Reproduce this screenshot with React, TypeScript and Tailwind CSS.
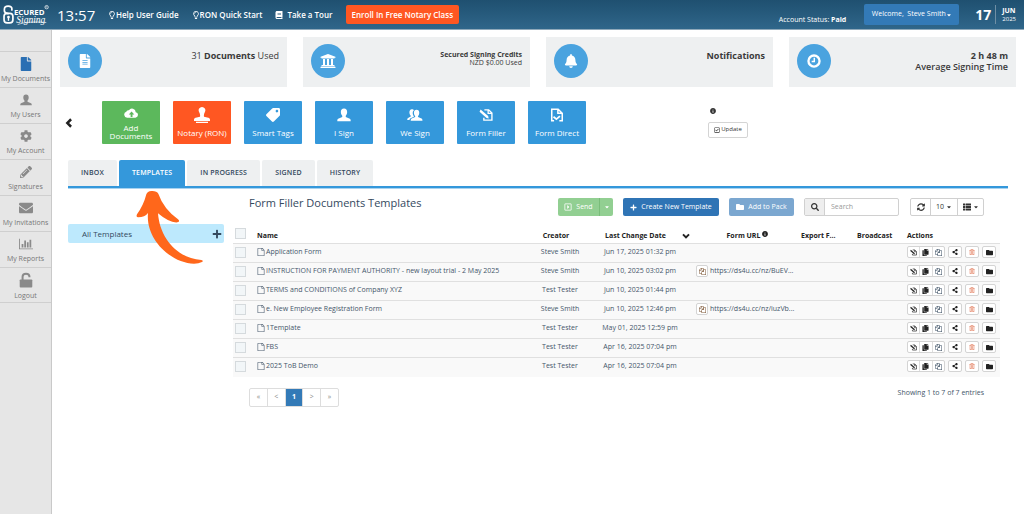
import type { ReactNode } from "react";
import {
  FaBell,
  FaBook,
  FaCaretDown,
  FaCog,
  FaCopy,
  FaEnvelope,
  FaFileAlt,
  FaFile,
  FaFolder,
  FaInfoCircle,
  FaPencilAlt,
  FaPlus,
  FaRegCaretSquareRight,
  FaRegCheckSquare,
  FaRegLightbulb,
  FaRegTrashAlt,
  FaSearch,
  FaShareAlt,
  FaSyncAlt,
  FaTag,
  FaThList,
  FaUniversity,
} from "react-icons/fa";

type IconProps = { className?: string };

function FileOutline({ className }: IconProps) {
  return (
    <svg viewBox="0 0 1792 1792" fill="currentColor" className={className}>
      <path d="M1596 380q28 28 48 76t20 88v1152q0 40-28 68t-68 28h-1344q-40 0-68-28t-28-68v-1600q0-40 28-68t68-28h896q40 0 88 20t76 48zm-444-244v376h376q-10-29-22-41l-313-313q-12-12-41-22zm384 1528v-1024h-416q-40 0-68-28t-28-68v-416h-768v1536h1280z" />
    </svg>
  );
}

function FilesOutline({ className }: IconProps) {
  return (
    <svg viewBox="0 0 1792 1792" fill="currentColor" className={className}>
      <path d="M1696 384q40 0 68 28t28 68v1216q0 40-28 68t-68 28h-960q-40 0-68-28t-28-68v-288h-544q-40 0-68-28t-28-68v-672q0-40 20-88t48-76l408-408q28-28 76-48t88-20h416q40 0 68 28t28 68v328q68-40 128-40h416zm-544 213l-299 299h299v-299zm-640-384l-299 299h299v-299zm196 647l316-316v-416h-384v416q0 40-28 68t-68 28h-416v640h512v-256q0-40 20-88t48-76zm956 804v-1152h-384v416q0 40-28 68t-68 28h-416v640h896z" />
    </svg>
  );
}

function BarChart({ className }: IconProps) {
  return (
    <svg viewBox="0 0 2048 1792" fill="currentColor" className={className}>
      <path d="M640 896v512h-256v-512h256zm384-512v1024h-256v-1024h256zm1024 1152v128h-2048v-1536h128v1408h1920zm-640-896v768h-256v-768h256zm384-384v1152h-256v-1152h256z" />
    </svg>
  );
}

function Person({ className }: IconProps) {
  return (
    <svg viewBox="0 0 24 24" fill="currentColor" className={className}>
      <path d="M12 1c3.600 0 5.400 2.400 5.400 6 0 3-1.200 5-2.400 6.400v2l7 3c1 .5 1.500 1.500 1.500 4.100H.5c0-2.600.5-3.600 1.500-4.100l7-3v-2C7.800 12 6.600 10 6.600 7c0-3.600 1.800-6 5.400-6z" />
    </svg>
  );
}

function People({ className }: IconProps) {
  return (
    <svg viewBox="0 0 30 24" fill="currentColor" className={className}>
      <path d="M9 1c2 0 3.200.7 4 2-2 1.500-2.600 4.200-2.100 7 .3 2 1 3.300 2 4.400v1.100l-6 2.800c-1.500.7-2 1.700-2.200 3.200H.5c0-2.600.5-3.500 1.500-4l5-2.500v-1.500C5.500 12 4.500 10 4.500 7c0-3.600 1.500-6 4.500-6z" />
      <path d="M18 2c3.400 0 5 2.400 5 5.700 0 2.900-1 4.800-2.300 6.100v2l6.500 2.800c1.300.6 1.800 1.600 1.800 4.400H7c0-2.800.5-3.800 1.800-4.400l6.500-2.800v-2C14 12.500 13 10.600 13 7.700 13 4.400 14.600 2 18 2z" />
    </svg>
  );
}

function Stamp({ className }: IconProps) {
  return (
    <svg viewBox="0 0 24 24" fill="currentColor" className={className}>
      <path d="M12 0a5 5 0 0 1 4.500 7.200C15 10 14.500 12 15 14.500l6.500 1.500c1.500.4 2.500 1.500 2.500 3v2H0v-2c0-1.500 1-2.600 2.500-3L9 14.500c.5-2.500 0-4.500-1.500-7.300A5 5 0 0 1 12 0zM3 22h18v2H3z" />
    </svg>
  );
}

function CloudUpload({ className }: IconProps) {
  return (
    <svg viewBox="0 0 26 18" fill="currentColor" fillRule="evenodd" className={className}>
      <path d="M6 17.500a5.500 5.500 0 0 1-1.500-10.700A4 4 0 0 1 9.200 4 6.700 6.700 0 0 1 21.500 7.600 5 5 0 0 1 21 17.500zM14 6.500l-5 5h3.300V16h3.400v-4.500H19z" />
    </svg>
  );
}

function OpenLock({ className }: IconProps) {
  return (
    <svg viewBox="0 0 24 28" className={className}>
      <path d="M6 14V8.500C6 5 8.500 3 12 3s6 2 6 5v1" fill="none" stroke="currentColor" strokeWidth="3.500" />
      <rect x="1" y="13" width="22" height="14" rx="1.500" fill="currentColor" />
    </svg>
  );
}

function Clock({ className }: IconProps) {
  return (
    <svg viewBox="0 0 24 24" fill="none" stroke="currentColor" className={className}>
      <circle cx="12" cy="12" r="9.500" strokeWidth="4" />
      <path d="M12.500 6.500V13H8" strokeWidth="2.500" />
    </svg>
  );
}

function Chevron({ className }: IconProps) {
  return (
    <svg viewBox="0 0 24 24" fill="none" stroke="currentColor" strokeWidth="6" className={className}>
      <path d="M3 7l9 9 9-9" />
    </svg>
  );
}

function FormFillerIcon({ className }: IconProps) {
  return (
    <svg viewBox="0 0 26 24" fill="none" stroke="currentColor" strokeWidth="2.500" className={className}>
      <path d="M10 2.500h8l6 6v13H9V17M17 3v6h6" />
      <path d="M3 2l-2 4 13 11.500 4 1-1-4.500z" fill="currentColor" strokeWidth="0" />
    </svg>
  );
}

function FormDirectIcon({ className }: IconProps) {
  return (
    <svg viewBox="0 0 24 24" fill="none" stroke="currentColor" strokeWidth="2.600" className={className}>
      <path d="M7 22H3V2h11l7 7v13h-5M13.500 2v7H21" />
      <path d="M6 15l5 4 6-5" strokeWidth="3" />
    </svg>
  );
}

function Logo() {
  return (
    <svg viewBox="0 0 138 64" className="h-[22px] w-[47px] shrink-0" fill="none" stroke="#fff" aria-label="Secured Signing">
      <path d="M29 17v-3c0-5-5-8-11-8S7 9 7 15v5c0 4 3 6 11 8" strokeWidth="5" strokeLinecap="round" />
      <rect x="6" y="27" width="26" height="28" rx="9" strokeWidth="5" />
      <circle cx="19" cy="38" r="4" fill="#fff" stroke="none" />
      <path d="M19 38v11" strokeWidth="4" />
      <text x="35" y="31" fill="#fff" stroke="none" fontSize="23" fontWeight="700" fontFamily="Open Sans, sans-serif">
        ECURED
      </text>
      <text x="42" y="56" fill="#fff" stroke="none" fontSize="28" fontStyle="italic" fontFamily="Liberation Serif, serif">
        Signing
      </text>
      <path d="M46 60c20-7 50-9 84-6" strokeWidth="2" />
      <circle cx="131" cy="9" r="5" strokeWidth="2" />
      <path d="M129 12V7h3v3l2 2" strokeWidth="1" />
    </svg>
  );
}

function Pointer() {
  return (
    <svg viewBox="405 300 210 225" fill="#ff671b" className="pointer-events-none absolute top-0.5 left-[67px] h-[75px] w-[70px]">
      <path d="M439 313Q442 304 454 303Q470 302 475 311Q490 355 534 388Q542 395 532 397Q508 399 474 370C479 442 530 505 604 510Q612 512 606 516Q596 521 582 521C515 520 436 450 444 369Q434 382 415 382Q407 382 411 373Q431 345 439 313Z" />
    </svg>
  );
}

const NAV = [
  { label: "My Documents", icon: <FaFile className="size-3.5 text-[#2a6fb3]" /> },
  { label: "My Users", icon: <Person className="size-3" /> },
  { label: "My Account", icon: <FaCog className="size-3" /> },
  { label: "Signatures", icon: <FaPencilAlt className="size-3" /> },
  { label: "My Invitations", icon: <FaEnvelope className="size-3.5" /> },
  { label: "My Reports", icon: <BarChart className="size-3.5" /> },
  { label: "Logout", icon: <OpenLock className="size-4" /> },
];

const TOOLS = [
  { label: "Add Documents", color: "bg-[#5cb85c]", icon: <CloudUpload className="h-2.5 w-4" /> },
  { label: "Notary (RON)", color: "bg-[#ff5722]", icon: <Stamp className="size-4" /> },
  { label: "Smart Tags", color: "bg-[#3498db]", icon: <FaTag className="size-3.5 -scale-x-100" /> },
  { label: "I Sign", color: "bg-[#3498db]", icon: <Person className="size-3.5" /> },
  { label: "We Sign", color: "bg-[#3498db]", icon: <People className="size-4" /> },
  { label: "Form Filler", color: "bg-[#3498db]", icon: <FormFillerIcon className="size-3.5" /> },
  { label: "Form Direct", color: "bg-[#3498db]", icon: <FormDirectIcon className="size-3.5" /> },
];

const TABS = ["INBOX", "TEMPLATES", "IN PROGRESS", "SIGNED", "HISTORY"];

const ROWS = [
  { name: "Application Form", creator: "Steve Smith", date: "Jun 17, 2025 01:32 pm", url: "" },
  {
    name: "INSTRUCTION FOR PAYMENT AUTHORITY - new layout trial - 2 May 2025",
    creator: "Steve Smith",
    date: "Jun 10, 2025 03:02 pm",
    url: "https://ds4u.cc/nz/BuEV...",
  },
  { name: "TERMS and CONDITIONS of Company XYZ", creator: "Test Tester", date: "Jun 10, 2025 01:44 pm", url: "" },
  {
    name: "e. New Employee Registration Form",
    creator: "Steve Smith",
    date: "Jun 10, 2025 12:46 pm",
    url: "https://ds4u.cc/nz/iuzVb...",
  },
  { name: "1Template", creator: "Test Tester", date: "May 01, 2025 12:59 pm", url: "" },
  { name: "FBS", creator: "Test Tester", date: "Apr 16, 2025 07:04 pm", url: "" },
  { name: "2025 ToB Demo", creator: "Test Tester", date: "Apr 16, 2025 07:04 pm", url: "" },
];

function Header() {
  return (
    <header className="flex h-[30px] items-center border-b border-[#8fa9ba] bg-linear-to-b from-[#1f5070] to-[#2f668a] pr-2 pl-0.5 text-white">
      <Logo />
      <span className="ml-2 w-[51px] text-[15px] leading-[18px] font-medium">13:57</span>
      <nav className="flex items-center gap-[13px] text-[8px] font-semibold whitespace-nowrap">
        <a href="#guide" className="flex items-center">
          <FaRegLightbulb /> Help User Guide
        </a>
        <a href="#start" className="flex items-center">
          <FaRegLightbulb /> RON Quick Start
        </a>
        <a href="#tour" className="flex items-center gap-1">
          <FaBook /> Take a Tour
        </a>
        <a href="#enroll" className="flex h-[19px] items-center rounded-xs bg-[#ff5722] px-1.5">
          Enroll In Free Notary Class
        </a>
      </nav>
      <div className="ml-auto flex items-center whitespace-nowrap">
        <span className="pt-3 text-[7px]">
          Account Status: <b>Paid</b>
        </span>
        <button className="ml-[18px] flex h-[21px] w-[95px] items-center justify-center rounded-xs bg-[#337ab7] text-[7px] font-medium">
          Welcome,&nbsp; Steve Smith
          <FaCaretDown className="size-1.5" />
        </button>
        <span className="ml-4 text-[14px] font-bold">17</span>
        <span className="ml-1 flex h-[19px] flex-col justify-center border-l border-[#6f8fa5] pl-1.5 text-[7px] leading-[8px]">
          <b>JUN</b>
          <span className="text-[6px]">2025</span>
        </span>
      </div>
    </header>
  );
}

function Sidebar() {
  return (
    <aside className="w-[52px] shrink-0 border-r border-[#c9c9c9] bg-[#e6e6e6] pt-[21px]">
      {NAV.map((item) => (
        <a
          key={item.label}
          href="#nav"
          className="flex h-9 flex-col items-center justify-end border-t border-[#cfcfcf] pb-1 text-[7px] leading-[8px] whitespace-nowrap text-[#777] last:border-b last:pb-0.5"
        >
          <span className="flex flex-1 items-center text-[#8a8a8a]">{item.icon}</span>
          {item.label}
        </a>
      ))}
    </aside>
  );
}

function StatCard({ icon, children }: { icon: ReactNode; children: ReactNode }) {
  return (
    <div className="flex h-[50px] items-start justify-between bg-[#eef0f1] px-2 pt-[7px] text-[#3a3a3a]">
      <span className="flex size-[34px] items-center justify-center rounded-full bg-[#4aa3df] text-white">{icon}</span>
      <div className="pt-1.5 text-right text-[9px] leading-[11px]">{children}</div>
    </div>
  );
}

function Tools() {
  return (
    <div className="mt-3.5 flex items-center">
      <button aria-label="Previous" className="ml-1 w-[38px]">
        <Chevron className="size-2.5 rotate-90 text-[#222]" />
      </button>
      <div className="flex gap-[13px]">
        {TOOLS.map((tool) => (
          <button
            key={tool.label}
            className={`flex h-[43px] w-[58px] flex-col items-center justify-end rounded-[1px] px-1 pb-1 text-[8px] leading-[8px] text-white ${tool.color}`}
          >
            <span className="flex flex-1 items-center">{tool.icon}</span>
            <span className={tool.label === "Add Documents" ? "" : "pb-[3px] whitespace-nowrap"}>{tool.label}</span>
          </button>
        ))}
      </div>
      <div className="ml-[122px] flex flex-col gap-2 text-[#333]">
        <FaInfoCircle className="ml-0.5 size-1.5" />
        <button className="flex h-4 w-10 items-center justify-center gap-px rounded-xs border border-[#d4d4d4] bg-white text-[6px]">
          <FaRegCheckSquare className="size-1.5" /> Update
        </button>
      </div>
    </div>
  );
}

function Toolbar() {
  return (
    <div className="flex h-[18px] items-center text-[7px] font-medium whitespace-nowrap text-white">
      <h2 className="mr-auto -mt-2 pl-4 text-[11px] font-medium text-[#34495e]">Form Filler Documents Templates</h2>
      <div className="mr-2.5 flex h-full rounded-xs bg-[#92cf92]">
        <button className="flex w-[41px] items-center justify-center gap-1">
          <FaRegCaretSquareRight className="size-2" /> Send
        </button>
        <button aria-label="Send options" className="flex w-3.5 items-center justify-center border-l border-[#79bd79]">
          <FaCaretDown className="size-1.5" />
        </button>
      </div>
      <button className="mr-2.5 flex h-full w-24 items-center justify-center gap-1 rounded-xs bg-[#2f74b5]">
        <FaPlus className="size-[7px]" /> Create New Template
      </button>
      <button className="mr-2.5 flex h-full w-[65px] items-center justify-center gap-1 rounded-xs bg-[#7ba7d0]">
        <FaFolder className="size-2" /> Add to Pack
      </button>
      <label className="mr-[11px] flex h-full w-[95px] overflow-hidden rounded-xs border border-[#d0d0d0] text-[#333]">
        <span className="flex w-5 shrink-0 items-center justify-center border-r border-[#d0d0d0] bg-[#eee]">
          <FaSearch className="size-2" />
        </span>
        <input
          type="search"
          aria-label="Search"
          placeholder="Search"
          className="w-full min-w-0 px-1.5 text-[7px] placeholder:text-[#999]"
        />
      </label>
      <div className="mr-4 flex h-full divide-x divide-[#d0d0d0] rounded-xs border border-[#d0d0d0] text-[#333]">
        <button aria-label="Refresh" className="flex w-5 items-center justify-center">
          <FaSyncAlt className="size-2" />
        </button>
        <button className="flex w-[27px] items-center justify-center gap-0.5">
          10 <FaCaretDown className="size-1.5" />
        </button>
        <button aria-label="Columns" className="flex w-[25px] items-center justify-center gap-0.5">
          <FaThList className="size-2" /> <FaCaretDown className="size-1.5" />
        </button>
      </div>
    </div>
  );
}

const ACTION = "flex h-3 items-center justify-center rounded-xs border border-[#d4d4d4] bg-white";

function Actions() {
  return (
    <div className="flex items-center gap-[3px] pl-0.5 text-[#222]">
      <div className="flex h-3 w-[38px] divide-x divide-[#ddd] rounded-xs border border-[#d4d4d4] bg-white">
        <button aria-label="Fill" className="flex flex-1 items-center justify-center">
          <FormFillerIcon className="size-[7px]" />
        </button>
        <button aria-label="Copy" className="flex flex-1 items-center justify-center">
          <FaCopy className="size-[7px]" />
        </button>
        <button aria-label="Duplicate" className="flex flex-1 items-center justify-center">
          <FilesOutline className="size-[7px] text-[#34495e]" />
        </button>
      </div>
      <button aria-label="Share" className={`w-3.5 ${ACTION}`}>
        <FaShareAlt className="size-1.5" />
      </button>
      <button aria-label="Delete" className={`w-3.5 text-[#e0714f] ${ACTION}`}>
        <FaRegTrashAlt className="size-1.5" />
      </button>
      <button aria-label="Folder" className={`w-3.5 ${ACTION}`}>
        <FaFolder className="size-[7px]" />
      </button>
    </div>
  );
}

const CHECKBOX = "ml-0.5 block size-[11px] appearance-none border border-[#d5dadd] bg-[#f2f6f8]";

function Templates() {
  return (
    <table className="mt-2 w-full table-fixed text-center text-[7px] leading-[10px] whitespace-nowrap text-[#44566a]">
      <colgroup>
        <col className="w-6" />
        <col />
        <col className="w-12" />
        <col className="w-[112px]" />
        <col className="w-[103px]" />
        <col className="w-14" />
        <col className="w-[50px]" />
        <col className="w-[95px]" />
      </colgroup>
      <thead className="text-[#222]">
        <tr className="h-[19px] *:pt-1">
          <th>
            <input type="checkbox" aria-label="Select all" className={`mb-1 ${CHECKBOX}`} />
          </th>
          <th className="text-left">Name</th>
          <th className="pr-2">Creator</th>
          <th>
            <span className="flex items-center gap-4 pl-[21px]">
              Last Change Date <Chevron className="size-2" />
            </span>
          </th>
          <th>
            <span className="flex justify-center gap-0.5">
              Form URL <FaInfoCircle className="size-1.5" />
            </span>
          </th>
          <th className="pl-0.5 text-left">Export F...</th>
          <th className="pl-0.5 text-left">Broadcast</th>
          <th className="pl-0.5 text-left">Actions</th>
        </tr>
      </thead>
      <tbody>
        {ROWS.map((row) => (
          <tr key={row.name} className="h-[19px] border-t border-[#e0e0e0] bg-[#f9f9f9] *:pb-0.5">
            <td>
              <input type="checkbox" aria-label={`Select ${row.name}`} className={CHECKBOX} />
            </td>
            <td className="text-left">
              <span className="flex items-center gap-px">
                <FileOutline className="size-2" />
                {row.name}
              </span>
            </td>
            <td>{row.creator}</td>
            <td>{row.date}</td>
            <td>
              {row.url && (
                <span className="flex items-center gap-0.5">
                  <button aria-label="Copy URL" className={`w-3 text-[#7a5230] ${ACTION}`}>
                    <FilesOutline className="size-[7px]" />
                  </button>
                  {row.url}
                </span>
              )}
            </td>
            <td />
            <td />
            <td>
              <Actions />
            </td>
          </tr>
        ))}
      </tbody>
    </table>
  );
}

function Pagination() {
  return (
    <div className="mt-[11px] flex items-start justify-between px-4 text-[7px] text-[#44566a]">
      <nav className="flex h-[19px] w-[90px] divide-x divide-[#ddd] rounded-xs border border-[#ddd] text-[#888]">
        {["«", "<", "1", ">", "»"].map((label) => (
          <button key={label} className={label === "1" ? "flex-1 bg-[#337ab7] font-bold text-white" : "flex-1"}>
            {label}
          </button>
        ))}
      </nav>
      <span>Showing 1 to 7 of 7 entries</span>
    </div>
  );
}

export default function App() {
  return (
    <div className="flex min-h-screen flex-col bg-white font-['Open_Sans',sans-serif]">
      <Header />
      <div className="flex flex-1">
        <Sidebar />
        <main className="min-w-0 flex-1 px-2 pt-[7px]">
          {/* Stats */}
          <div className="grid grid-cols-4 gap-4">
            <StatCard icon={<FaFileAlt className="size-3.5" />}>
              <p>
                31 <b>Documents</b> Used
              </p>
            </StatCard>
            <StatCard icon={<FaUniversity className="size-4" />}>
              <div className="pt-px text-[7px] leading-[8px]">
                <b>Secured Signing Credits</b>
                <p>NZD $0.00 Used</p>
              </div>
            </StatCard>
            <StatCard icon={<FaBell className="size-3.5" />}>
              <p className="font-bold">Notifications</p>
            </StatCard>
            <StatCard icon={<Clock className="size-3.5" />}>
              <p className="font-bold">2 h 48 m</p>
              <p className="font-semibold">Average Signing Time</p>
            </StatCard>
          </div>

          <Tools />

          {/* Tabs */}
          <div className="mx-2 mt-4 flex gap-0.5 border-b-2 border-[#3498db] text-[7px] font-semibold whitespace-nowrap text-[#34495e] shadow-[0_1px_0_#a9d3f0]">
            {TABS.map((tab) => (
              <button
                key={tab}
                className={`h-[26px] rounded-t-xs px-[13px] tracking-wide ${tab === "TEMPLATES" ? "bg-[#3498db] text-white" : "bg-[#eef0f1]"}`}
              >
                {tab}
              </button>
            ))}
          </div>

          <div className="relative mx-2 flex gap-[9px] pt-2.5">
            <div className="w-[156px] shrink-0 pt-[26px]">
              <a
                href="#all"
                className="flex h-[19px] items-center justify-between rounded-xs bg-[#bde9fd] pr-0.5 pl-3.5 text-[8px] text-[#34495e]"
              >
                All Templates
                <FaPlus className="size-2.5" />
              </a>
            </div>
            <section className="min-w-0 flex-1 pr-2">
              <Toolbar />
              <Templates />
              <Pagination />
            </section>
            <Pointer />
          </div>
        </main>
      </div>
    </div>
  );
}
